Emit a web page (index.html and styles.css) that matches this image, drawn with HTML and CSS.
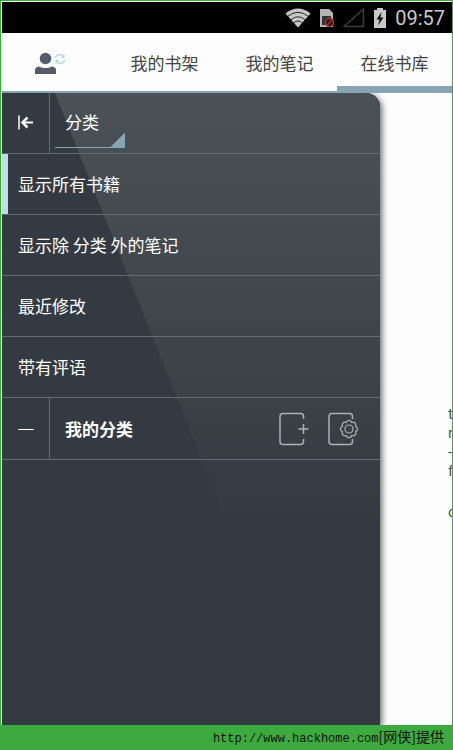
FILE: index.html
```html
<!DOCTYPE html>
<html lang="zh-CN">
<head>
    <meta charset="UTF-8">
    <meta name="viewport" content="width=device-width, initial-scale=1">
    <title>在线书库</title>
    <link rel="stylesheet" href="styles.css">
</head>
<body>

    <div class="screen">

        <!-- Status bar -->
        <div class="status-bar">
            <svg class="wifi" width="26" height="20" viewBox="0 0 26 20">
                <path d="M0.500 5.500Q13 -4.500 25.500 5.500L13 19.500Z" fill="#c8c8c8"/>
                <path d="M2.500 8.500Q13 0 23.500 8.500M5.500 12Q13 5.500 20.500 12M8.500 15Q13 11 17.500 15" fill="none" stroke="#222" stroke-width="1"/>
            </svg>
            <svg class="sim" width="16" height="20" viewBox="0 0 16 20">
                <path d="M1 1H10L14 5V19H1Z" fill="#b4b4b4"/>
                <path d="M3 8H12V17H3Z" fill="#333"/>
                <circle cx="10.500" cy="14.500" r="4" fill="#2a1212" stroke="#a8332f" stroke-width="1.500"/>
                <path d="M8 17L13 12" stroke="#a8332f" stroke-width="1.500"/>
            </svg>
            <svg class="signal" width="22" height="20" viewBox="0 0 22 20">
                <path d="M1 18.500H20.500V1Z" fill="none" stroke="#3c3c3c" stroke-width="1.500"/>
            </svg>
            <svg class="battery" width="14" height="20" viewBox="0 0 14 20">
                <path d="M4 0H10V2H13V20H1V2H4Z" fill="#c8c8c8"/>
                <path d="M8.500 4L3.500 11.500H6.500L5 17.500L10.500 9.500H7.500Z" fill="#111"/>
            </svg>
            <span class="time">09:57</span>
        </div>

        <!-- Tabs -->
        <nav class="tabs">
            <a href="#account" class="account" aria-label="账户">
                <svg width="32" height="24" viewBox="0 0 32 24">
                    <circle cx="11.500" cy="7.500" r="5.800" fill="#535d6a"/>
                    <path d="M1 23V19Q1 16 5 15.500Q11.500 18.500 18 15.500Q22 16 22 19V23Z" fill="#535d6a"/>
                    <g fill="none" stroke="#b5dbe3" stroke-width="1.500">
                        <path d="M21.500 7Q22.500 3.500 26 3.500Q28 3.500 29.500 5.500"/>
                        <path d="M30.500 9Q29.500 12.500 26 12.500Q24 12.500 22.500 10.500"/>
                    </g>
                    <path d="M30.500 3V7H26.500ZM21.500 13V9H25.500Z" fill="#b5dbe3"/>
                </svg>
            </a>
            <a href="#shelf">我的书架</a>
            <a href="#notes">我的笔记</a>
            <a href="#library" class="active">在线书库</a>
        </nav>

        <!-- Page with the drawer on the left -->
        <main class="content">
            <aside class="drawer">
                <div class="drawer-head">
                    <button class="side-btn" aria-label="收起">
                        <svg width="16" height="16" viewBox="0 0 16 16" fill="none" stroke="#fff" stroke-width="2">
                            <path d="M1 0.500V14.500" stroke-width="1.500"/>
                            <path d="M4 7.500H15"/>
                            <path d="M9.500 2.500L4.500 7.500L9.500 12.500" stroke-width="2.500"/>
                        </svg>
                    </button>
                    <select class="sort" aria-label="排序方式">
                        <option>分类</option>
                    </select>
                </div>

                <ul class="menu">
                    <li><button class="menu-btn selected">显示所有书籍</button></li>
                    <li><button class="menu-btn">显示除 分类 外的笔记</button></li>
                    <li><button class="menu-btn">最近修改</button></li>
                    <li><button class="menu-btn">带有评语</button></li>
                </ul>

                <div class="group">
                    <button class="side-btn" aria-label="折叠">
                        <svg width="16" height="16" viewBox="0 0 16 16">
                            <path d="M0 8.500H16" stroke="#fff" stroke-width="1"/>
                        </svg>
                    </button>
                    <h2>我的分类</h2>
                    <button class="icon-btn" aria-label="添加分类">
                        <svg width="32" height="34" viewBox="0 0 32 34" fill="none" stroke="#a9b3b9" stroke-width="1.500">
                            <path d="M24.500 7V4.500Q24.500 1.500 21.500 1.500H4Q1 1.500 1 4.500V29.500Q1 32.500 4 32.500H21.500Q24.500 32.500 24.500 29.500V27"/>
                            <path d="M19.500 17H29.500M24.500 12V22"/>
                        </svg>
                    </button>
                    <button class="icon-btn" aria-label="管理分类">
                        <svg width="32" height="34" viewBox="0 0 32 34" fill="none" stroke="#a9b3b9" stroke-width="1.500">
                            <path d="M24.500 7V4.500Q24.500 1.500 21.500 1.500H4Q1 1.500 1 4.500V29.500Q1 32.500 4 32.500H21.500Q24.500 32.500 24.500 29.500V27"/>
                            <path stroke-width="1.200" stroke-linejoin="round" d="M18.300 10.500A2.800 2.800 0 0 1 23.700 10.500A2.800 2.800 0 0 1 27.500 14.300A2.800 2.800 0 0 1 27.500 19.700A2.800 2.800 0 0 1 23.700 23.500A2.800 2.800 0 0 1 18.300 23.500A2.800 2.800 0 0 1 14.500 19.700A2.800 2.800 0 0 1 14.500 14.300A2.800 2.800 0 0 1 18.300 10.500Z"/>
                            <circle cx="21" cy="17" r="4" stroke-width="1.200"/>
                        </svg>
                    </button>
                </div>
            </aside>

            <div class="article">
                <p>t<br>r<br>-<br>f</p>
                <p>o</p>
            </div>
        </main>
    </div>

    <footer class="credit">
        <span class="url">http://www.hackhome.com</span>[网侠]提供
    </footer>

</body>
</html>
```
FILE: styles.css
```css
* {
    margin: 0;
    padding: 0;
    box-sizing: border-box;
}
body {
    min-height: 100vh;
    display: flex;
    flex-direction: column;
    background: #3caa3f;
    font-family: "Noto Sans CJK SC", sans-serif;
    font-size: 17px;
}
button, select {
    font: inherit;
    color: #fff;
    background: none;
    border: none;
    cursor: pointer;
}
svg {
    display: block;
}
.screen {
    flex: 1;
    display: flex;
    flex-direction: column;
    margin: 1px 1px 0;
    border: 1px solid #fdfdfd;
    border-width: 1px 0 0 1px;
    background: #fdfdfd;
}

/* Status bar */
.status-bar {
    height: 31px;
    display: flex;
    align-items: center;
    justify-content: flex-end;
    gap: 8px;
    padding-right: 7px;
    background: #000;
}
.time {
    font-family: Roboto, sans-serif;
    font-size: 20px;
    line-height: 24px;
    color: #c8c8c8;
}

/* Tabs */
.tabs {
    height: 60px;
    display: grid;
    grid-template-columns: 105px repeat(3, 1fr);
    border-bottom: 2px solid #86a4b2;
}
.tabs a {
    display: flex;
    align-items: center;
    justify-content: center;
    padding-top: 1px;
    color: #444;
    text-decoration: none;
}
.tabs .account {
    justify-content: flex-start;
    padding-left: 32px;
}
.tabs .active {
    padding-top: 6px;
    border-bottom: 5px solid #86a4b2;
}

/* Drawer */
.content {
    flex: 1;
    display: flex;
    overflow: hidden;
}
.drawer {
    width: 84%;
    position: relative;
    z-index: 0;
    background: #333a41;
    border-top-right-radius: 14px;
    box-shadow: 2px 2px 6px rgba(0, 0, 0, 0.6);
}
/* slanted light over the upper right of the drawer */
.drawer::before {
    content: "";
    position: absolute;
    z-index: -1;
    top: 0;
    left: 0;
    right: 0;
    height: 430px;
    border-top-right-radius: 14px;
    background: linear-gradient(#4b5257, #333a41);
    clip-path: polygon(53px 0, 100% 0, 100% 100%, 225px 100%);
}
.drawer-head, .group {
    display: flex;
    border-bottom: 1px solid #656b72;
}
.drawer-head {
    height: 61px;
}
.group {
    height: 62px;
    align-items: center;
    padding-right: 20px;
}
.side-btn {
    width: 48px;
    height: 100%;
    display: flex;
    align-items: center;
    justify-content: center;
    border-right: 1px solid #656b72;
}
.sort {
    width: 70px;
    height: 50px;
    margin: 5px;
    padding-left: 10px;
    padding-bottom: 2px;
    appearance: none;
    border-bottom: 1px solid #86a4b2;
    background: linear-gradient(135deg, transparent 50%, #86a4b2 50%) right bottom / 15px 15px no-repeat;
}
.sort option {
    background: #333a41;
}
.menu {
    list-style: none;
}
.menu-btn {
    display: block;
    width: 100%;
    height: 61px;
    padding-left: 16px;
    padding-bottom: 2px;
    text-align: left;
    border-bottom: 1px solid #656b72;
}
.selected {
    box-shadow: inset 6px 0 #c3dde2;
}
.group h2 {
    flex: 1;
    padding-left: 15px;
    font-size: 17px;
    font-weight: bold;
    color: #fff;
}
.icon-btn {
    margin-left: 17px;
}

/* Page under the drawer */
.article {
    flex: 1;
    padding-top: 312px;
    padding-left: 68px;
    overflow: hidden;
    font-family: Roboto, sans-serif;
    font-size: 15px;
    line-height: 19px;
    color: #555;
}
.article p {
    margin-bottom: 22px;
}

/* Footer */
.credit {
    height: 25px;
    padding-right: 9px;
    text-align: right;
    font-size: 14px;
    line-height: 22px;
    color: #111;
}
.url {
    font-family: "Liberation Mono", monospace;
    font-size: 12px;
}
```
